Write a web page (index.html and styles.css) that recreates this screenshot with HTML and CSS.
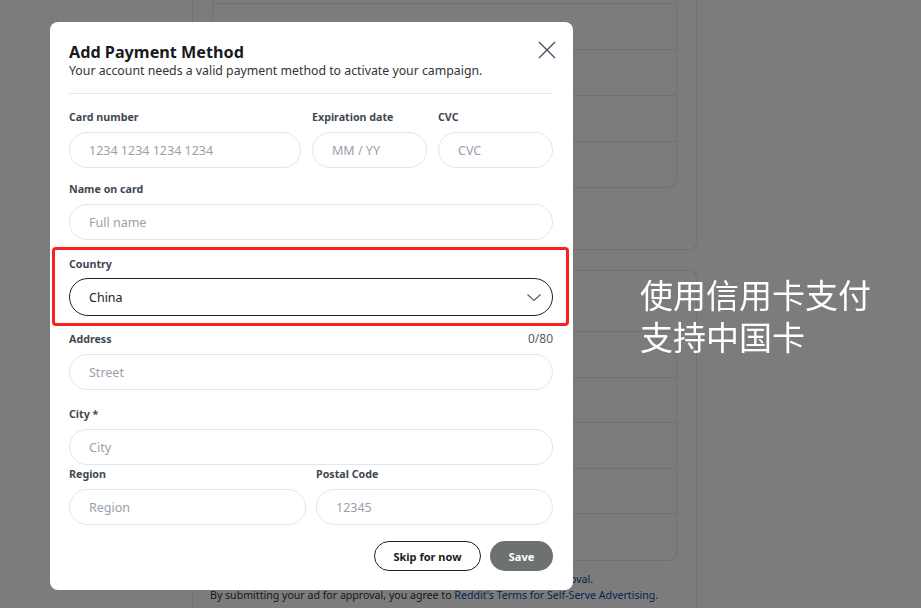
FILE: index.html
```html
<!DOCTYPE html>
<html lang="en">
<head>
<meta charset="utf-8">
<title>Add Payment Method</title>
<link rel="stylesheet" href="styles.css">
</head>
<body>
<div class="page">
  <aside class="sidebar"></aside>
  <main class="main">
    <section class="card card-top">
      <div class="table table-top">
        <div class="row row-clip"></div>
        <div class="row"></div>
        <div class="row"></div>
        <div class="row"></div>
        <div class="row row-last"></div>
      </div>
    </section>
    <section class="card card-bottom">
      <div class="table table-bottom">
        <div class="row"></div>
        <div class="row"></div>
        <div class="row"></div>
        <div class="row"></div>
        <div class="row row-last"></div>
      </div>
      <p class="note">Your ad will be reviewed by our team before it runs. Learn about <a href="#">ad approval</a>.</p>
      <p class="note">By submitting your ad for approval, you agree to <a href="#">Reddit's Terms for Self-Serve Advertising</a>.</p>
    </section>
  </main>
</div>

<div class="overlay"></div>

<div class="modal">
  <header class="modal-head">
    <h1 class="title">Add Payment Method</h1>
    <p class="subtitle">Your account needs a valid payment method to activate your campaign.</p>
    <button class="close" aria-label="Close">
      <svg width="18" height="18" viewBox="0 0 18 18"><path d="M1 1 L17 17 M17 1 L1 17" stroke="#3a4a5c" stroke-width="1.2" fill="none"/></svg>
    </button>
  </header>
  <div class="divider"></div>

  <div class="grid grid-card">
    <div class="field">
      <label class="label">Card number</label>
      <div class="input placeholder">1234 1234 1234 1234</div>
    </div>
    <div class="field">
      <label class="label">Expiration date</label>
      <div class="input placeholder">MM / YY</div>
    </div>
    <div class="field">
      <label class="label">CVC</label>
      <div class="input placeholder">CVC</div>
    </div>
  </div>

  <div class="field field-name">
    <label class="label">Name on card</label>
    <div class="input placeholder">Full name</div>
  </div>

  <div class="highlight">
    <div class="field">
      <label class="label label-country">Country</label>
      <div class="select">
        <span>China</span>
        <svg class="chev" width="16" height="9" viewBox="0 0 16 9"><path d="M1.5 1.5 L8 7.5 L14.5 1.5" stroke="#6e5646" stroke-width="1.2" fill="none"/></svg>
      </div>
    </div>
  </div>

  <div class="field field-address">
    <div class="label-row">
      <label class="label">Address</label>
      <span class="count">0/80</span>
    </div>
    <div class="input placeholder">Street</div>
  </div>

  <div class="field field-city">
    <label class="label">City *</label>
    <div class="input placeholder">City</div>
  </div>

  <div class="grid grid-region">
    <div class="field">
      <label class="label">Region</label>
      <div class="input placeholder">Region</div>
    </div>
    <div class="field">
      <label class="label">Postal Code</label>
      <div class="input placeholder">12345</div>
    </div>
  </div>

  <div class="actions">
    <button class="btn btn-outline">Skip for now</button>
    <button class="btn btn-fill">Save</button>
  </div>
</div>

<div class="annotation">
  <div class="annotation-line">使用信用卡支付</div>
  <div class="annotation-line">支持中国卡</div>
</div>
</body>
</html>
```

FILE: styles.css
```css
* { box-sizing: border-box; }

html, body {
  margin: 0;
  padding: 0;
  height: 100%;
  overflow: hidden;
}

body {
  background: #ffffff;
  font-family: "Noto Sans", "Open Sans", sans-serif;
  color: #1a1a1b;
}

/* background page */
.page {
  display: flex;
  height: 608px;
}

.sidebar {
  width: 192px;
  flex: none;
}

.main {
  width: 505px;
  display: flex;
  flex-direction: column;
  gap: 20px;
}

.card {
  background: #ffffff;
  border: 1px solid #e8eaec;
}

.card-top {
  border-top: none;
  border-radius: 0 0 8px 8px;
  padding: 0 19px 61px 19px;
}

.card-bottom {
  border-bottom: none;
  border-radius: 8px 8px 0 0;
  padding: 60px 19px 0 17px;
  flex: 1;
}

.table {
  width: 465px;
  border: 1px solid #e8eaec;
}

.table-top {
  border-top: none;
  border-radius: 0 0 8px 8px;
}

.table-bottom {
  border-radius: 8px;
  margin-left: 2px;
}

.row {
  height: 46px;
  border-bottom: 1px solid #e8eaec;
}

.row-clip { height: 4px; }
.table-top .row-last { height: 45px; border-bottom: none; }
.table-bottom .row { height: 45.5px; }
.table-bottom .row-last { border-bottom: none; }

.note {
  margin: 0;
  font-size: 10.6px;
  line-height: 16px;
  color: #333333;
  white-space: nowrap;
}

.note:first-of-type { margin-top: 10px; }

.note a {
  color: #0b4aa8;
  text-decoration: none;
}

/* overlay */
.overlay {
  position: fixed;
  inset: 0;
  background: rgba(0, 2, 0, 0.517);
}

/* modal */
.modal {
  position: absolute;
  left: 50px;
  top: 22px;
  width: 523px;
  height: 568px;
  background: #ffffff;
  border-radius: 8px;
  padding: 20px 20px 0 19px;
  display: flex;
  flex-direction: column;
}

.modal-head {
  position: relative;
}

.title {
  margin: 0;
  font-size: 16.2px;
  line-height: 20px;
  font-weight: 700;
  color: #1a1a1b;
}

.subtitle {
  margin: 1px 0 0 0;
  font-size: 12.3px;
  line-height: 16px;
  color: #333333;
}

.close {
  position: absolute;
  right: -5px;
  top: -3px;
  width: 22px;
  height: 22px;
  padding: 2px;
  border: none;
  background: transparent;
  display: flex;
  align-items: center;
  justify-content: center;
}

.divider {
  margin-top: 14px;
  height: 1px;
  background: #e6e8ea;
}

.field {
  display: flex;
  flex-direction: column;
}

.label {
  font-size: 10.7px;
  line-height: 16px;
  font-weight: 700;
  color: #3f4852;
  margin-bottom: 7px;
}

.label-row {
  display: flex;
  justify-content: space-between;
}

.count {
  font-size: 12px;
  line-height: 16px;
  color: #555b61;
}

.input {
  height: 36px;
  border: 1px solid #e3e7eb;
  border-radius: 18px;
  padding-left: 19px;
  display: flex;
  align-items: center;
  font-size: 12.5px;
  padding-top: 1px;
}

.placeholder {
  color: #98a2ac;
}

.grid {
  display: grid;
}

.grid-card {
  margin-top: 15px;
  grid-template-columns: 232px 115px 115px;
  column-gap: 11px;
}

.field-name { margin-top: 13px; }

.highlight {
  margin: 7px -16px 0 -17px;
  border: 3px solid #ff1f1f;
  border-radius: 4px;
  padding: 6px 13px 7px 14px;
}

.label-country { margin-bottom: 6px; }

.select {
  height: 38px;
  border: 1px solid #1f2326;
  border-radius: 19px;
  padding: 0 10px 0 19px;
  display: flex;
  align-items: center;
  justify-content: space-between;
  font-size: 12.5px;
  color: #1c1c1c;
}

.chev { margin-top: 1px; }

.field-address { margin-top: 5px; }
.field-city { margin-top: 16px; }

.grid-region {
  margin-top: 1px;
  grid-template-columns: 237px 237px;
  column-gap: 10px;
}

.actions {
  margin-top: 16px;
  display: flex;
  justify-content: flex-end;
  gap: 9px;
}

.btn {
  height: 30px;
  border-radius: 15px;
  font-family: "Noto Sans", "Open Sans", sans-serif;
  font-size: 11px;
  font-weight: 700;
  padding: 0;
}

.btn-outline {
  width: 107px;
  border: 1px solid #1c1f22;
  background: #ffffff;
  color: #1a1a1b;
}

.btn-fill {
  width: 63px;
  border: none;
  background: #6d7270;
  color: #ffffff;
}

/* annotation */
.annotation {
  position: absolute;
  left: 640px;
  top: 275px;
  display: flex;
  flex-direction: column;
  gap: 4px;
  font-family: "Noto Sans CJK SC", sans-serif;
  font-size: 33px;
  line-height: 38px;
  color: #ffffff;
  font-weight: 400;
}

.annotation-line {
  height: 38px;
}
```
